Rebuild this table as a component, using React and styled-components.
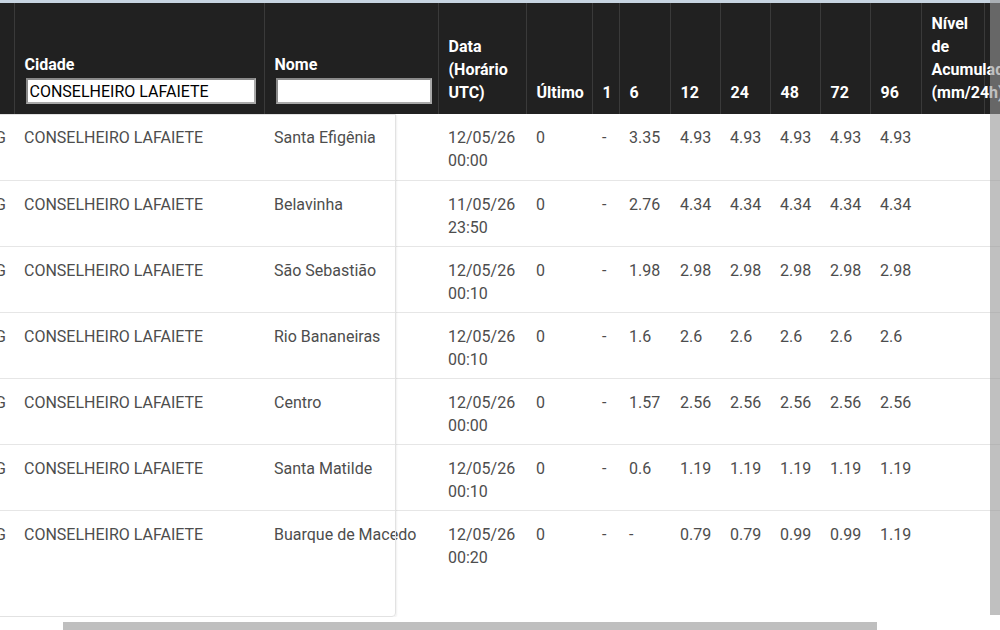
import React from "react";
import styled, { createGlobalStyle } from "styled-components";

const GlobalStyle = createGlobalStyle`
  html, body {
    margin: 0;
    padding: 0;
    background: #fff;
    font-family: Roboto, "Liberation Sans", sans-serif;
  }
`;

const widths = [43, 250, 174, 88, 66, 27, 51, 50, 50, 50, 50, 51, 63, 80];
const horas = ["1", "6", "12", "24", "48", "72", "96"];

const rows = [
  { nome: "Santa Efigênia", data: "12/05/26", hora: "00:00", vals: ["-", "3.35", "4.93", "4.93", "4.93", "4.93", "4.93"] },
  { nome: "Belavinha", data: "11/05/26", hora: "23:50", vals: ["-", "2.76", "4.34", "4.34", "4.34", "4.34", "4.34"] },
  { nome: "São Sebastião", data: "12/05/26", hora: "00:10", vals: ["-", "1.98", "2.98", "2.98", "2.98", "2.98", "2.98"] },
  { nome: "Rio Bananeiras", data: "12/05/26", hora: "00:10", vals: ["-", "1.6", "2.6", "2.6", "2.6", "2.6", "2.6"] },
  { nome: "Centro", data: "12/05/26", hora: "00:00", vals: ["-", "1.57", "2.56", "2.56", "2.56", "2.56", "2.56"] },
  { nome: "Santa Matilde", data: "12/05/26", hora: "00:10", vals: ["-", "0.6", "1.19", "1.19", "1.19", "1.19", "1.19"] },
  { nome: "Buarque de Macedo", data: "12/05/26", hora: "00:20", vals: ["-", "-", "0.79", "0.79", "0.99", "0.99", "1.19"] },
];

const App = () => {
  return (
    <>
      <GlobalStyle />
      <Page>
        <TopStrip />
        <Viewport>
          <Table>
            <colgroup>
              {widths.map((w, idx) => (
                <col key={idx} style={{ width: w }} />
              ))}
            </colgroup>
            <thead>
              <tr>
                <Th></Th>
                <Th>
                  Cidade
                  <Filter width={230} defaultValue="CONSELHEIRO LAFAIETE" />
                </Th>
                <Th>
                  Nome
                  <Filter width={156} defaultValue="" />
                </Th>
                <Th>Data (Horário UTC)</Th>
                <Th>Último</Th>
                {horas.map((h) => (
                  <Th key={h}>{h}</Th>
                ))}
                <Th>Nível de Acumulado (mm/24h)</Th>
                <Th></Th>
              </tr>
            </thead>
            <tbody>
              {rows.map((row, idx) => (
                <Row key={idx} last={idx === rows.length - 1}>
                  <Td>MG</Td>
                  <Td>CONSELHEIRO LAFAIETE</Td>
                  <Td>{row.nome}</Td>
                  <Td>
                    {row.data}
                    <br />
                    {row.hora}
                  </Td>
                  <Td>0</Td>
                  {row.vals.map((v, i) => (
                    <Td key={i}>{v}</Td>
                  ))}
                  <Td></Td>
                  <Td></Td>
                </Row>
              ))}
            </tbody>
          </Table>
          <Panel />
        </Viewport>
        <BottomBar>
          <HThumb />
        </BottomBar>
        <VThumb />
      </Page>
    </>
  );
};

const Page = styled.div`
  position: relative;
  width: 1000px;
  height: 630px;
  overflow: hidden;
  display: flex;
  flex-direction: column;
`;

const TopStrip = styled.div`
  height: 3px;
  flex: none;
  background: #c8d5e2;
`;

const Viewport = styled.div`
  position: relative;
  height: 614px;
  flex: none;
  overflow: hidden;
`;

const Table = styled.table`
  table-layout: fixed;
  border-collapse: collapse;
  width: 1093px;
  margin-left: -29px;
  font-size: 16px;
  line-height: 23px;
`;

const Th = styled.th`
  background: #212121;
  color: #fff;
  font-weight: 700;
  text-align: left;
  vertical-align: bottom;
  height: 111px;
  box-sizing: border-box;
  padding: 8px 9px 10px 10px;
  border-right: 1px solid #3a3a3a;
  white-space: normal;
  overflow: visible;
`;

const Filter = styled.input`
  display: block;
  box-sizing: border-box;
  width: ${(p) => p.width}px;
  height: 26px;
  margin: 2px 0 0 1px;
  padding: 0 2px;
  border: 2px solid #a9a9a9;
  border-top-color: #8a8a8a;
  border-left-color: #8a8a8a;
  background: #fff;
  color: #000;
  font-family: Roboto, "Liberation Sans", sans-serif;
  font-size: 16px;
  outline: none;
`;

const Row = styled.tr`
  td {
    border-bottom: ${(p) => (p.last ? "none" : "1px solid #e6e6e6")};
  }
`;

const Td = styled.td`
  vertical-align: top;
  padding: 12px 9px 7px 10px;
  height: 66px;
  box-sizing: border-box;
  color: #4d4d4d;
  white-space: nowrap;
`;

const Panel = styled.div`
  position: absolute;
  left: -10px;
  top: 111px;
  width: 404px;
  height: 501px;
  border: 1px solid #e2e2e2;
  border-radius: 0 0 4px 0;
  box-shadow: 1px 1px 2px rgba(0, 0, 0, 0.06);
  pointer-events: none;
`;

const BottomBar = styled.div`
  flex: 1;
  display: flex;
  align-items: flex-end;
  padding-left: 63px;
`;

const HThumb = styled.div`
  width: 814px;
  height: 8px;
  background: #bfbfbf;
`;

const VThumb = styled.div`
  position: absolute;
  top: 0;
  right: 0;
  width: 10px;
  height: 615px;
  background: rgba(150, 150, 150, 0.6);
`;

export default App;
